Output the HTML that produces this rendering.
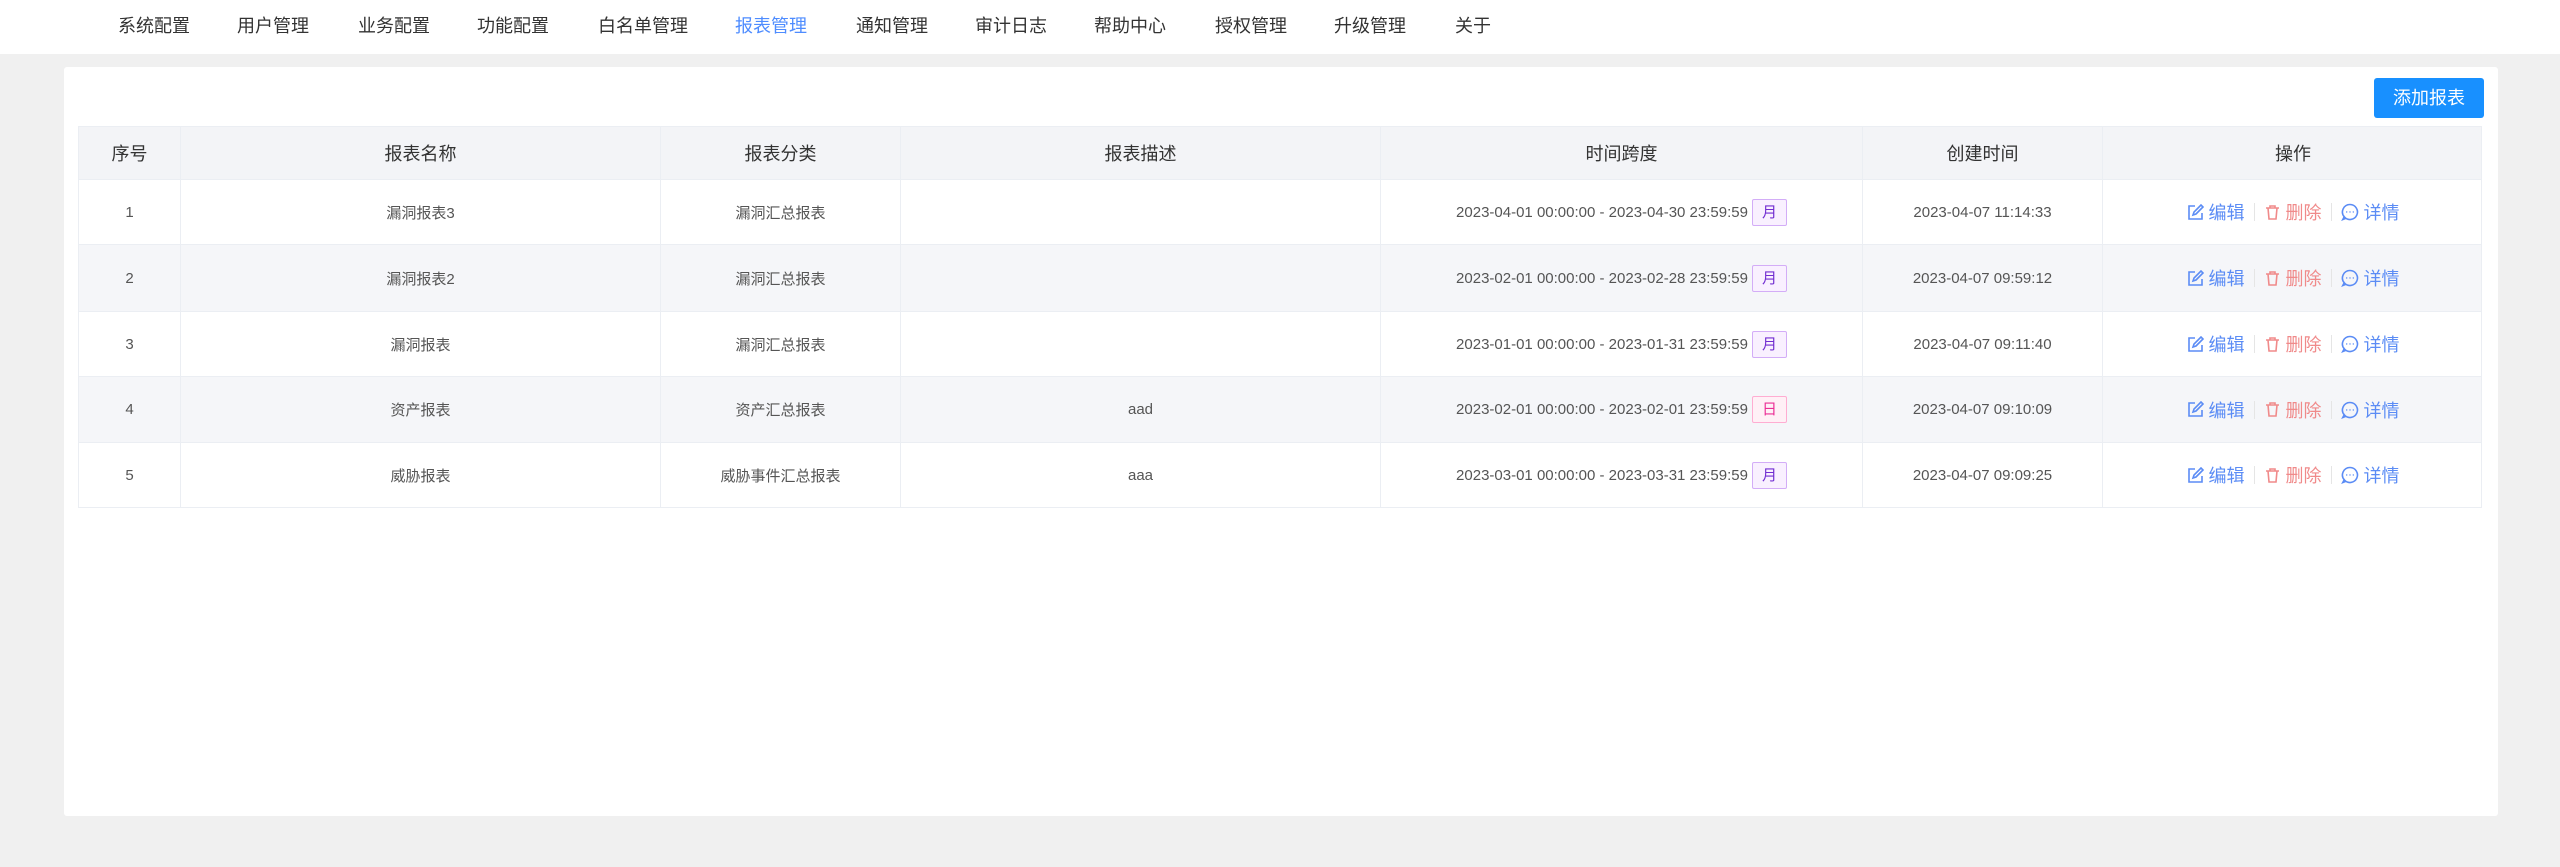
<!DOCTYPE html>
<html><head><meta charset="utf-8"><style>
*{margin:0;padding:0;box-sizing:border-box}
body{width:2560px;height:867px;background:#f0f0f0;font-family:"Liberation Sans","Noto Sans CJK SC",sans-serif;position:relative;overflow:hidden;color:#333}
.nav{position:absolute;left:0;top:0;width:2560px;height:54px;background:#fff}
.nav span{position:absolute;top:14px;font-size:18px;line-height:24px;color:#333}
.card{position:absolute;left:64px;top:67px;width:2434px;height:749px;background:#fff;border-radius:3px}
.btn{position:absolute;left:2374px;top:78px;width:110px;height:40px;background:#1890ff;color:#fff;font-size:18px;line-height:40px;text-align:center;border-radius:3px}
.row{position:absolute;left:78px;width:2404px;border-bottom:1px solid #ebeef3;border-left:1px solid #ebeef3;border-right:1px solid #ebeef3}
.cell{position:absolute;top:0;height:100%;border-right:1px solid #ebeef3;display:flex;align-items:center;justify-content:center;font-size:15px;color:#555}
.hd .cell{font-size:18px;color:#333}
.tag{display:inline-block;width:35px;height:27px;line-height:25px;text-align:center;font-size:15px;border:1px solid #d3adf7;background:#f9f0ff;color:#722ed1;border-radius:2px;margin-left:4px}
.tag.d{border-color:#ffadd2;background:#fff0f6;color:#eb2f96}
.act{font-size:18px;display:flex;align-items:center}
.act>span{display:flex;align-items:center}
.act .e{color:#5b8cf5}.act .r{color:#f08a8a}
.sep{display:inline-block;width:1px;height:18px;background:#e5e5e5;margin:0 9px}
.act svg{margin-right:5px}
</style></head><body>
<div class="nav">
<span style="left:118px">系统配置</span><span style="left:237px">用户管理</span><span style="left:358px">业务配置</span><span style="left:477px">功能配置</span><span style="left:598px">白名单管理</span><span style="left:735px;color:#4e8cff">报表管理</span><span style="left:856px">通知管理</span><span style="left:975px">审计日志</span><span style="left:1094px">帮助中心</span><span style="left:1215px">授权管理</span><span style="left:1334px">升级管理</span><span style="left:1455px">关于</span>
</div>
<div class="card"></div>
<div class="btn">添加报表</div>
<div id="t"></div>
<script>
const cols=[78,180,660,900,1380,1862,2102,2482];
const hd=["序号","报表名称","报表分类","报表描述","时间跨度","创建时间","操作"];
const rows=[
["1","漏洞报表3","漏洞汇总报表","","2023-04-01 00:00:00 - 2023-04-30 23:59:59","月","2023-04-07 11:14:33"],
["2","漏洞报表2","漏洞汇总报表","","2023-02-01 00:00:00 - 2023-02-28 23:59:59","月","2023-04-07 09:59:12"],
["3","漏洞报表","漏洞汇总报表","","2023-01-01 00:00:00 - 2023-01-31 23:59:59","月","2023-04-07 09:11:40"],
["4","资产报表","资产汇总报表","aad","2023-02-01 00:00:00 - 2023-02-01 23:59:59","日","2023-04-07 09:10:09"],
["5","威胁报表","威胁事件汇总报表","aaa","2023-03-01 00:00:00 - 2023-03-31 23:59:59","月","2023-04-07 09:09:25"]];
const ic={
e:'<svg width="17" height="17" viewBox="0 0 17 17" fill="none" stroke="#5b8cf5" stroke-width="1.6"><path d="M8 2H2v13h13V9"/><path d="M6 11l1-3 7-7 2 2-7 7z"/></svg>',
r:'<svg width="17" height="17" viewBox="0 0 17 17" fill="none" stroke="#f08a8a" stroke-width="1.6"><path d="M2 4h13M6 4V2h5v2M4 4l1 11h7l1-11"/></svg>',
d:'<svg width="18" height="18" viewBox="0 0 18 18" fill="none" stroke="#5b8cf5" stroke-width="1.6"><path d="M9 1.5A7.5 7.5 0 1 1 3.2 13.8L1.8 16.5 5 15.2"/><path d="M3.2 13.8A7.5 7.5 0 0 1 9 1.5"/><circle cx="5.7" cy="9" r=".7" fill="#5b8cf5" stroke="none"/><circle cx="9" cy="9" r=".7" fill="#5b8cf5" stroke="none"/><circle cx="12.3" cy="9" r=".7" fill="#5b8cf5" stroke="none"/></svg>'};
let h='';
function row(top,ht,bg,cells,cls){
 let s=`<div class="row ${cls}" style="top:${top}px;height:${ht}px;background:${bg}">`;
 for(let i=0;i<7;i++){s+=`<div class="cell" style="left:${cols[i]-78}px;width:${cols[i+1]-cols[i]}px;${i==6?'border-right:none':''}">${cells[i]}</div>`}
 return s+'</div>';
}
h+=row(126,54,'#f3f4f7',hd,'hd');
const tops=[180,245,312,377,443];
rows.forEach((r,i)=>{
 const act=`<span class="act"><span class="e">${ic.e}编辑</span><span class="sep"></span><span class="r">${ic.r}删除</span><span class="sep"></span><span class="e">${ic.d}详情</span></span>`;
 const c=[r[0],r[1],r[2],r[3],`${r[4]}<span class="tag ${r[5]=='日'?'d':''}">${r[5]}</span>`,r[6],act];
 h+=row(tops[i],(i<4?tops[i+1]:508)-tops[i],i%2?'#f5f6f9':'#fff',c,'');
});
document.getElementById('t').innerHTML=h;
document.querySelector('.hd').style.borderTop='1px solid #ebeef3';
</script>
</body></html>
